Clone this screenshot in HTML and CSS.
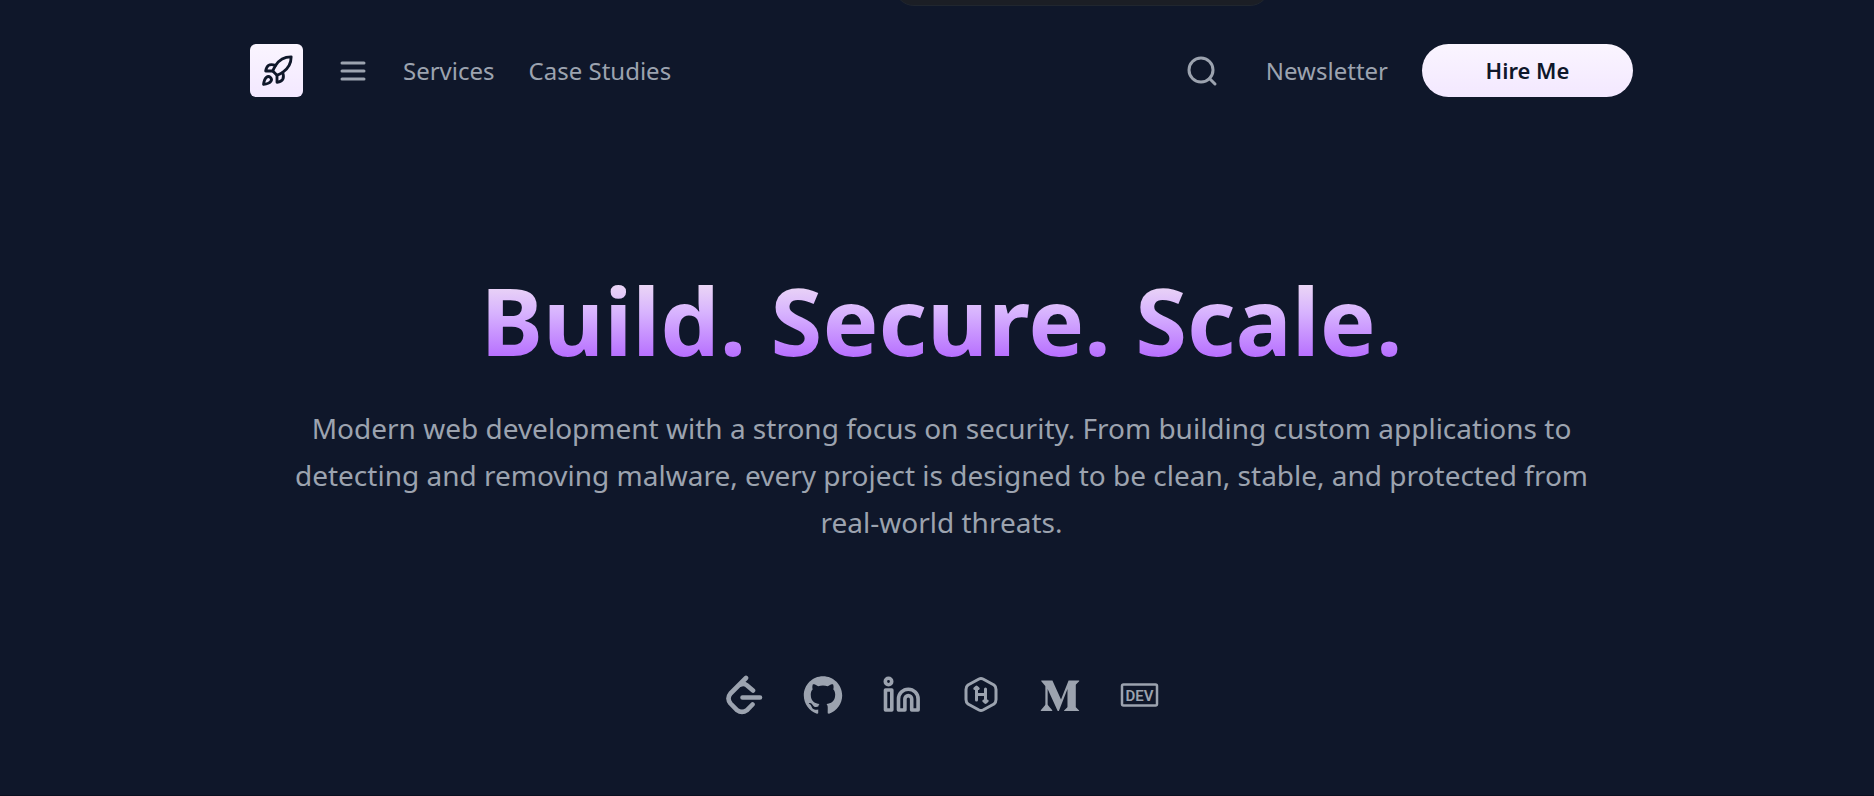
FILE: index.html
```html
<!DOCTYPE html>
<html lang="en">
<head>
<meta charset="utf-8">
<meta name="viewport" content="width=device-width, initial-scale=1">
<title>Build. Secure. Scale.</title>
<link rel="stylesheet" href="styles.css">
</head>
<body>
<div class="pill" aria-hidden="true"></div>
<div class="page">
  <header class="header">
    <nav class="nav" aria-label="Main">
      <a class="logo" href="#" aria-label="Home">
        <svg viewBox="0 0 24 24"><path d="M4.5 16.5c-1.5 1.26-2 5-2 5s3.74-.5 5-2c.71-.84.7-2.13-.09-2.91a2.18 2.18 0 0 0-2.91-.09z"/><path d="m12 15-3-3a22 22 0 0 1 2-3.95A12.88 12.88 0 0 1 22 2c0 2.72-.78 7.5-6 11a22.35 22.35 0 0 1-4 2z"/><path d="M9 12H4s.55-3.03 2-4c1.62-1.08 5 0 5 0"/><path d="M12 15v5s3.03-.55 4-2c1.08-1.62 0-5 0-5"/></svg>
      </a>
      <button class="icon-button" type="button" aria-label="Menu">
        <svg viewBox="0 0 32 32"><path d="M5 8h22M5 16h22M5 24h22"/></svg>
      </button>
      <a class="link" href="#">Services</a>
      <a class="link" href="#">Case Studies</a>
    </nav>
    <div class="nav">
      <button class="icon-button search" type="button" aria-label="Search">
        <svg viewBox="0 0 32 32"><circle cx="15" cy="15" r="12"/><path d="m23.500 23.500 5.500 5.500"/></svg>
      </button>
      <a class="link" href="#">Newsletter</a>
      <a class="cta" href="#">Hire Me</a>
    </div>
  </header>
  <main class="hero">
    <h1 class="title">Build. Secure. Scale.</h1>
    <p class="lead">Modern web development with a strong focus on security. From building custom applications to detecting and removing malware, every project is designed to be clean, stable, and protected from real-world threats.</p>
    <div class="social">
      <a href="#" aria-label="LeetCode"><svg class="line" viewBox="0 0 40 40"><g stroke-width="4.600"><path d="M22 3 6.500 18.500q-4 5 0 10l6.500 6.700q5 3.500 10 0l5.500-5.700M17 9.500q3-1.500 5.500.5l6.500 5.500M18.500 22.500H36"/></g></svg></a>
      <a href="#" aria-label="GitHub"><svg viewBox="-.5 -.5 25 25"><path d="M12 .297c-6.630 0-12 5.373-12 12 0 5.303 3.438 9.800 8.205 11.385.6.113.82-.258.82-.577 0-.285-.01-1.040-.015-2.040-3.338.724-4.042-1.610-4.042-1.610C4.422 18.070 3.633 17.700 3.633 17.700c-1.087-.744.084-.729.084-.729 1.205.084 1.838 1.236 1.838 1.236 1.070 1.835 2.809 1.305 3.495.998.108-.776.417-1.305.76-1.605-2.665-.3-5.466-1.332-5.466-5.930 0-1.310.465-2.380 1.235-3.220-.135-.303-.54-1.523.105-3.176 0 0 1.005-.322 3.300 1.230.96-.267 1.980-.399 3-.405 1.020.006 2.040.138 3 .405 2.280-1.552 3.285-1.230 3.285-1.230.645 1.653.24 2.873.12 3.176.765.840 1.230 1.910 1.230 3.220 0 4.610-2.805 5.625-5.475 5.920.42.360.81 1.096.81 2.220 0 1.606-.015 2.896-.015 3.286 0 .315.21.69.825.57C20.565 22.092 24 17.592 24 12.297c0-6.627-5.373-12-12-12"/></svg></a>
      <a href="#" aria-label="LinkedIn"><svg class="line" viewBox="0 0 40 40"><g stroke-width="3.600"><circle cx="6.500" cy="6.500" r="3.200"/><path d="M3.500 15h6.300v20H3.500zM16.500 35V24a9.800 9.800 0 0 1 19.600 0v11h-6.400V24a3.400 3.400 0 0 0-6.800 0v11z"/></g></svg></a>
      <a href="#" aria-label="HackerRank"><svg class="line" viewBox="0 0 40 40"><g stroke-width="3"><path d="M18 4 7 10Q5 11.500 5 14.500v10q0 3 2 4.500l11 6q2 1 4 0l11-6q2-1.500 2-4.500v-10q0-3-2-4.500L22 4q-2-1-4 0z"/><path d="M15.500 13v12M24.500 14v12M15.500 19.500h9M13.800 13.500l1.700-1.500 1.700 1.500zM22.800 26l1.700 1.500 1.700-1.500z"/></g></svg></a>
      <a href="#" aria-label="Medium"><svg viewBox="-.5 -.5 25 25"><path d="M2.846 6.887c.03-.295-.083-.586-.303-.784l-2.240-2.700v-.403h6.958l5.378 11.795 4.728-11.795h6.633v.403l-1.916 1.837c-.165.126-.247.333-.213.538v13.498c-.034.204.048.411.213.537l1.871 1.837v.403h-9.412v-.403l1.939-1.882c.19-.19.19-.246.19-.537v-10.910l-5.389 13.688h-.728l-6.275-13.688v9.174c-.052.385.076.774.347 1.052l2.521 3.058v.404h-7.148v-.404l2.521-3.058c.27-.279.39-.67.325-1.052v-10.608z"/></svg></a>
      <a href="#" aria-label="DEV"><svg viewBox="0 0 40 40"><rect class="frame" x="3" y="9.500" width="35" height="21" rx="1.500"/><text class="dev" x="20.500" y="25.500" text-anchor="middle">DEV</text></svg></a>
    </div>
  </main>
</div>
</body>
</html>
```
FILE: styles.css
```css
* { box-sizing: border-box; }
html { background: #0f172a; }
body {
  margin: 0;
  min-height: 100vh;
  color: #9ca3af;
  background: #0f172a;
  border-bottom: 1px solid #0b0f20;
  font-family: "Segoe UI", "Noto Sans", "Open Sans", sans-serif;
}
a { color: inherit; text-decoration: none; }
svg { display: block; }
.pill {
  position: absolute;
  top: -46px;
  left: calc(50% - 43px);
  width: 376px;
  height: 52px;
  border: 1px solid #20262f;
  border-radius: 20px;
  background: #1b1e25;
}
.page {
  width: 100%;
  max-width: 1432px;
  margin: 0 auto;
  padding: 44px 20px 0 29px;
}
.header, .nav { display: flex; align-items: center; }
.header { justify-content: space-between; }
.nav { gap: 34px; }
.link { font-size: 24px; line-height: 34px; }
.logo {
  display: grid;
  place-items: center;
  width: 53px;
  height: 53px;
  border-radius: 6px;
  background: linear-gradient(#faf5ff, #f3e8ff);
}
.logo svg {
  width: 34px;
  height: 34px;
  fill: none;
  stroke: #0f172a;
  stroke-width: 2;
  stroke-linecap: round;
  stroke-linejoin: round;
}
.icon-button {
  width: 32px;
  height: 32px;
  padding: 0;
  border: 0;
  background: none;
  color: inherit;
}
.icon-button svg { fill: none; stroke: currentColor; stroke-width: 3; stroke-linecap: round; }
.search { margin-right: 14px; }
.cta {
  width: 211px;
  border-radius: 27px;
  background: linear-gradient(#faf5ff, #f3e8ff);
  color: #0f172a;
  font-size: 22px;
  font-weight: 600;
  line-height: 53px;
  text-align: center;
}
.hero { padding-top: 157px; text-align: center; }
.title {
  margin: 0;
  font-size: 94px;
  font-weight: 700;
  line-height: 132px;
  color: transparent;
  background: linear-gradient(#ecd8f5 22%, #d8b4fe 44%, #b76fff 78%);
  background-clip: text;
}
.lead {
  max-width: 1320px;
  margin: 19px auto 0;
  font-size: 28px;
  line-height: 47px;
}
.social { display: flex; justify-content: center; gap: 39px; margin-top: 129px; }
.social svg { width: 40px; height: 40px; fill: currentColor; }
.social .line { fill: none; stroke: currentColor; stroke-linecap: round; stroke-linejoin: round; }
.social .frame { fill: none; stroke: currentColor; stroke-width: 2.5; }
.dev { font-family: Roboto, sans-serif; font-size: 15px; font-weight: 600; }
```
